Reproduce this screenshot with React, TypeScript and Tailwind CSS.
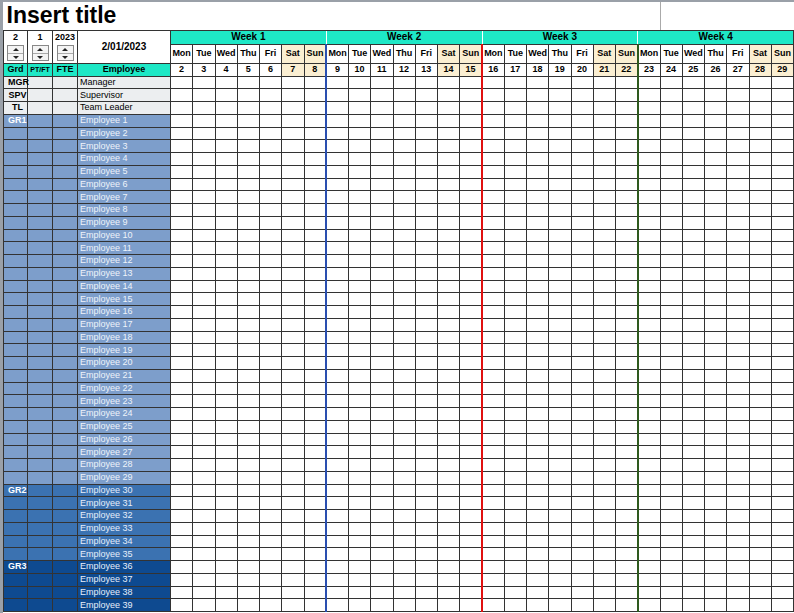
import React from "react";

const days = ["Mon","Tue","Wed","Thu","Fri","Sat","Sun"];
const sepColor = ["border-r-[#2a4fb0]","border-r-[#e01010]","border-r-[#2e5a1e]",""];

function Spinner() {
  return (
    <div className="mx-auto w-[17px] h-[16px] border border-[#888] bg-[#f4f4f4] flex flex-col">
      <div className="flex-1 flex items-center justify-center border-b border-[#aaa]"><div className="w-0 h-0 border-l-[3px] border-r-[3px] border-b-[3px] border-l-transparent border-r-transparent border-b-[#222]" /></div>
      <div className="flex-1 flex items-center justify-center"><div className="w-0 h-0 border-l-[3px] border-r-[3px] border-t-[3px] border-l-transparent border-r-transparent border-t-[#222]" /></div>
    </div>
  );
}

export default function App() {
  const rows: { g: string; n: string; bg: string; txt: string }[] = [
    { g: "MGR", n: "Manager", bg: "bg-[#eceef0]", txt: "text-black" },
    { g: "SPV", n: "Supervisor", bg: "bg-[#eceef0]", txt: "text-black" },
    { g: "TL", n: "Team Leader", bg: "bg-[#eceef0]", txt: "text-black" },
  ];
  for (let i = 1; i <= 39; i++) {
    const bg = i <= 29 ? "bg-[#7d9ecb]" : i <= 35 ? "bg-[#3b72b1]" : "bg-[#0e4a90]";
    rows.push({ g: i === 1 ? "GR1" : i === 30 ? "GR2" : i === 36 ? "GR3" : "", n: "Employee " + i, bg, txt: i <= 29 ? "text-[#eef3fa]" : "text-[#e6eefa]" });
  }
  const cell = "border border-[#333] p-0";
  const dayCls = (d: number) => {
    const w = Math.floor(d / 7);
    return d % 7 === 6 ? sepColor[w] + (w < 3 ? " border-r-2" : "") : "";
  };
  return (
    <div className="w-[794px] h-[613px] overflow-hidden bg-white border-l-[3px] border-t-[2px] border-[#9aa0a8]" style={{ fontFamily: '"Liberation Sans", Arial, sans-serif' }}>
      <table className="table-fixed border-collapse w-[791px] text-[9px] leading-none">
        <colgroup>
          <col className="w-[24px]" /><col className="w-[25px]" /><col className="w-[25px]" /><col className="w-[93px]" />
          {Array.from({ length: 28 }).map((_, i) => <col key={i} />)}
        </colgroup>
        <tbody>
          <tr className="h-[28px]">
            <td colSpan={26} className="p-0 pl-[3px] text-[23px] font-bold align-middle border-b border-[#333]">Insert title</td>
            <td colSpan={6} className="p-0 border-l border-[#aaa] border-b border-b-[#333]"></td>
          </tr>
          <tr className="h-[14px] font-bold">
            <td className={cell + " border-b-0 text-center"}>2</td>
            <td className={cell + " border-b-0 text-center"}>1</td>
            <td className={cell + " border-b-0 text-center"}>2023</td>
            <td rowSpan={2} className={cell + " text-center text-[10px]"}>2/01/2023</td>
            {[1,2,3,4].map((w) => (
              <td key={w} colSpan={7} className={cell + " bg-[#1ee8c6] text-center text-[10px] " + (w === 4 ? "" : "border-r-white")}>Week {w}</td>
            ))}
          </tr>
          <tr className="h-[19px] font-bold">
            <td className={cell + " border-t-0"}><Spinner /></td>
            <td className={cell + " border-t-0"}><Spinner /></td>
            <td className={cell + " border-t-0"}><Spinner /></td>
            {Array.from({ length: 28 }).map((_, d) => (
              <td key={d} className={cell + " text-center " + (d % 7 >= 5 ? "bg-[#fbefd2] " : "") + dayCls(d)}>{days[d % 7]}</td>
            ))}
          </tr>
          <tr className="h-[13px] font-bold">
            <td className={cell + " bg-[#1ee8c6] text-center"}>Grd</td>
            <td className={cell + " bg-[#1ee8c6] text-center text-[7px]"}>PT/FT</td>
            <td className={cell + " bg-[#1ee8c6] text-center"}>FTE</td>
            <td className={cell + " bg-[#1ee8c6] text-center"}>Employee</td>
            {Array.from({ length: 28 }).map((_, d) => (
              <td key={d} className={cell + " text-center " + (d % 7 >= 5 ? "bg-[#fbefd2] " : "") + dayCls(d)}>{d + 2}</td>
            ))}
          </tr>
          {rows.map((r, i) => (
            <tr key={i} className="h-[12.75px]">
              <td className={cell + " " + r.bg + " font-bold pl-[4px] " + (i < 3 ? "text-black text-center pl-0" : "text-white")}>{r.g}</td>
              <td className={cell + " " + r.bg}></td>
              <td className={cell + " " + r.bg}></td>
              <td className={cell + " " + r.bg + " " + r.txt + " pl-[2px] whitespace-nowrap"}>{r.n}</td>
              {Array.from({ length: 28 }).map((_, d) => (
                <td key={d} className={cell + " " + dayCls(d)}></td>
              ))}
            </tr>
          ))}
        </tbody>
      </table>
    </div>
  );
}
